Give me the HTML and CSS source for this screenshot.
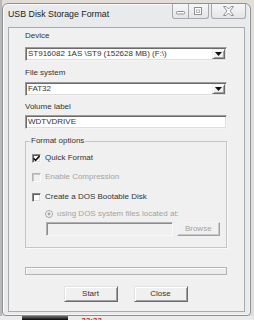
FILE: index.html
```html
<!DOCTYPE html>
<html lang="en">

<head>
    <meta charset="UTF-8">
    <title>USB Disk Storage Format</title>
    <link rel="stylesheet" href="styles.css">
</head>

<body>
    <div class="window">
        <div class="titlebar">
            <span class="title">USB Disk Storage Format</span>
            <div class="caption">
                <span class="cap-btn cap-min">
                    <svg width="10" height="4" viewBox="0 0 10 4"><rect x="0.5" y="0.5" width="8" height="2.5" rx="0.8" fill="#fff" stroke="#8d8f93"/></svg>
                </span>
                <span class="cap-btn cap-max">
                    <svg width="9" height="9" viewBox="0 0 9 9"><rect x="0.5" y="0.5" width="7" height="7" fill="#fff" stroke="#8d8f93"/><rect x="2.5" y="3" width="3" height="2.5" fill="none" stroke="#b4b6b9"/></svg>
                </span>
                <span class="cap-btn cap-close">
                    <svg width="11" height="10" viewBox="0 0 11 10"><polygon points="0.5,0.5 3,0.5 5.5,3 8,0.5 10.5,0.5 7,5 10.5,9.5 8,9.5 5.5,7 3,9.5 0.5,9.5 4,5" fill="#fff" stroke="#8d8f93" stroke-linejoin="round"/></svg>
                </span>
            </div>
        </div>

        <div class="client">
            <div class="label label-device">Device</div>
            <div class="combo combo-device">
                <span class="combo-text">ST916082 1AS \ST9 (152628 MB) (F:\)</span>
                <span class="combo-drop"><svg width="7" height="4" viewBox="0 0 7 4"><polygon points="0,0 7,0 3.5,4" fill="#111"/></svg></span>
            </div>

            <div class="label label-fs">File system</div>
            <div class="combo combo-fs">
                <span class="combo-text">FAT32</span>
                <span class="combo-drop"><svg width="7" height="4" viewBox="0 0 7 4"><polygon points="0,0 7,0 3.5,4" fill="#111"/></svg></span>
            </div>

            <div class="label label-vol">Volume label</div>
            <div class="textbox textbox-vol">WDTVDRIVE</div>

            <fieldset class="group">
                <legend>Format options</legend>
                <div class="opt-row row-quick">
                    <span class="checkbox"><svg width="7" height="7" viewBox="0 0 7 7"><path d="M0.5 3.2 L2.6 5.4 L6.5 1" fill="none" stroke="#111" stroke-width="1.6"/></svg></span>
                    <span>Quick Format</span>
                </div>
                <div class="opt-row row-compress disabled">
                    <span class="checkbox"></span>
                    <span>Enable Compression</span>
                </div>
                <div class="opt-row row-dos">
                    <span class="checkbox"></span>
                    <span>Create a DOS Bootable Disk</span>
                </div>
                <div class="opt-row row-radio disabled">
                    <span class="radio"><svg width="8" height="8" viewBox="0 0 8 8"><circle cx="4" cy="4" r="3.5" fill="#f4f4f4" stroke="#a6a6a6"/><circle cx="4" cy="4" r="1.4" fill="#a6a6a6"/></svg></span>
                    <span>using DOS system files located at:</span>
                </div>
                <div class="path-row">
                    <div class="textbox path-box"></div>
                    <div class="btn btn-browse">Browse</div>
                </div>
            </fieldset>

            <div class="progress"></div>

            <div class="actions">
                <div class="btn">Start</div>
                <div class="btn">Close</div>
            </div>
        </div>
    </div>

    <div class="desk-strip">
        <span class="thumb"></span>
        <span class="clock">22:22</span>
    </div>
</body>

</html>
```

FILE: styles.css
```css
body {
    margin: 0;
    width: 254px;
    height: 320px;
    overflow: hidden;
    background: linear-gradient(to right, #b9b9b9 0 2px, #e2ded7 2px);
    font-family: 'Liberation Sans', Arial, sans-serif;
    font-size: 8px;
    color: #333;
}

.window {
    box-sizing: border-box;
    width: 249px;
    height: 313px;
    margin: 3px 0 0 2px;
    padding: 0 5px;
    background: #e9eaec;
    border: 1px solid #8e9094;
    border-radius: 6px 6px 4px 4px;
    box-shadow: inset 1px 1px #fbfbfb, inset -1px -1px #f4f4f4;
}

.titlebar {
    display: flex;
    height: 23px;
    margin-right: -1px;
}

.title {
    padding-top: 5px;
    font-size: 8.8px;
    line-height: 10px;
    color: #222;
}

.caption {
    display: flex;
    margin-left: auto;
    height: 15px;
}

.cap-btn {
    box-sizing: border-box;
    display: flex;
    align-items: center;
    justify-content: center;
    height: 15px;
    background: linear-gradient(#f6f6f7, #e4e5e7);
    border: 1px solid #a7a9ad;
    border-top: none;
}

.cap-min {
    width: 17px;
    border-radius: 0 0 0 3px;
    padding-top: 3px;
}

.cap-max {
    width: 20px;
    border-left: none;
    border-radius: 0 0 3px 0;
}

.cap-close {
    width: 35px;
    margin-left: 2px;
    border-radius: 0 0 3px 3px;
}

.client {
    box-sizing: border-box;
    height: 285px;
    padding: 0 17px 0 16px;
    background: #f0f0f0;
    border: 1px solid #a9abae;
}

.label {
    line-height: 10px;
}

.label-device {
    padding-top: 3px;
}

.label-fs {
    margin-top: 7px;
}

.label-vol {
    margin-top: 6px;
}

.combo,
.textbox {
    box-sizing: border-box;
    display: flex;
    align-items: center;
    height: 14px;
    padding: 0 1px 0 2px;
    background: #fff;
    border: 1px solid;
    border-color: #9c9c9c #f4f4f4 #f4f4f4 #9c9c9c;
    box-shadow: inset 1px 1px #6b6b6b, inset -1px -1px #dedede;
    line-height: 10px;
}

.combo-device {
    margin-top: 6px;
}

.combo-fs {
    margin-top: 4px;
}

.textbox-vol {
    margin-top: 3px;
}

.combo-text {
    flex: 1;
}

.combo-drop {
    box-sizing: border-box;
    display: flex;
    align-items: center;
    justify-content: center;
    width: 13px;
    height: 10px;
    background: #f0f0f0;
    border: 1px solid;
    border-color: #f0f0f0 #6b6b6b #6b6b6b #f0f0f0;
    box-shadow: inset 1px 1px #fff, inset -1px -1px #a0a0a0;
}

.group {
    box-sizing: border-box;
    width: 202px;
    min-width: 0;
    margin: 7px 0 0;
    padding: 7px 6px 11px;
    border: 1px solid #c5c5c5;
    box-shadow: 1px 1px #fbfbfb;
}

.group legend {
    margin-left: -2px;
    padding: 0 1px;
    line-height: 10px;
}

.opt-row {
    display: flex;
    align-items: center;
    gap: 4px;
    height: 10px;
    line-height: 10px;
}

.row-compress {
    margin-top: 9px;
}

.row-dos {
    margin-top: 10px;
}

.row-radio {
    margin-top: 7px;
    padding-left: 13px;
}

.disabled {
    color: #a3a3a3;
}

.checkbox {
    box-sizing: border-box;
    display: flex;
    align-items: center;
    justify-content: center;
    width: 9px;
    height: 9px;
    background: #fff;
    border: 1px solid;
    border-color: #8a8a8a #f4f4f4 #f4f4f4 #8a8a8a;
    box-shadow: inset 1px 1px #5e5e5e, inset -1px -1px #dedede;
}

.disabled .checkbox {
    background: #f0f0f0;
    border-color: #b4b4b4 #fafafa #fafafa #b4b4b4;
    box-shadow: inset 1px 1px #c8c8c8;
}

.radio {
    display: flex;
    width: 8px;
    height: 8px;
}

.path-row {
    display: flex;
    gap: 4px;
    margin-top: 3px;
    padding-left: 14px;
}

.path-box {
    width: 128px;
    background: #f0f0f0;
    border-color: #b0b0b0 #fafafa #fafafa #b0b0b0;
    box-shadow: inset 1px 1px #8c8c8c;
}

.btn {
    box-sizing: border-box;
    display: flex;
    align-items: center;
    justify-content: center;
    height: 16px;
    width: 54px;
    background: #f0f0f0;
    border: 1px solid;
    border-color: #e3e3e3 #6b6b6b #6b6b6b #e3e3e3;
    box-shadow: inset 1px 1px #fff, inset -1px -1px #a0a0a0;
    line-height: 10px;
}

.btn-browse {
    width: 44px;
    height: 14px;
    color: #a3a3a3;
    border-color: #f4f4f4 #a0a0a0 #a0a0a0 #f4f4f4;
    box-shadow: inset -1px -1px #c8c8c8;
}

.progress {
    box-sizing: border-box;
    height: 8px;
    margin-top: 19px;
    background: #ececec;
    border: 1px solid #b3b3b3;
    box-shadow: inset 1px 1px #fdfdfd;
}

.actions {
    display: flex;
    justify-content: center;
    gap: 16px;
    margin-top: 11px;
    padding-right: 1px;
}

.desk-strip {
    display: flex;
    align-items: flex-start;
    gap: 13px;
    height: 6px;
    padding-left: 22px;
    background: #ebebeb;
    overflow: hidden;
}

.thumb {
    width: 46px;
    height: 6px;
    background: linear-gradient(#6d6d6d, #121212 60%);
}

.clock {
    margin-top: 1px;
    font-size: 8px;
    font-weight: bold;
    font-style: italic;
    line-height: 8px;
    color: #c0302a;
}
```
